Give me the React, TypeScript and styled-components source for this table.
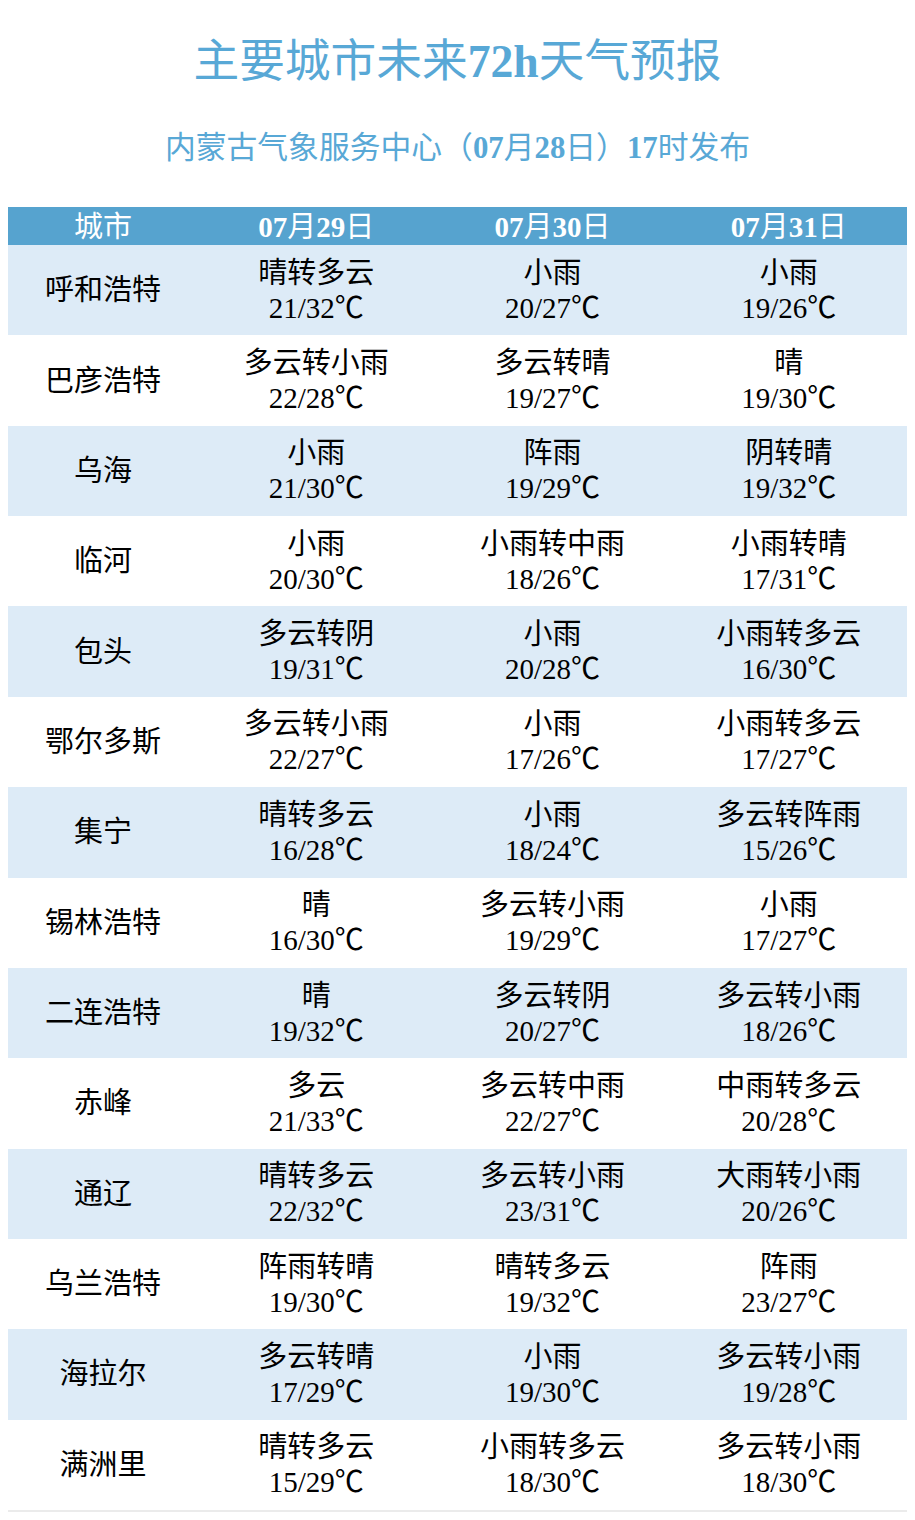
import React from "react"
import styled, { createGlobalStyle } from "styled-components"

const GlobalStyle = createGlobalStyle`
    body {
        margin: 0;
        background: #fff;
        font-family: "Liberation Serif", "Noto Sans CJK SC", serif;
    }
`;

type Day = [string, string]

interface ICity {
    name: string,
    days: Day[]
}

const dates = ["07月29日", "07月30日", "07月31日"]

const cities: ICity[] = [
    { name: "呼和浩特", days: [["晴转多云", "21/32"], ["小雨", "20/27"], ["小雨", "19/26"]] },
    { name: "巴彦浩特", days: [["多云转小雨", "22/28"], ["多云转晴", "19/27"], ["晴", "19/30"]] },
    { name: "乌海", days: [["小雨", "21/30"], ["阵雨", "19/29"], ["阴转晴", "19/32"]] },
    { name: "临河", days: [["小雨", "20/30"], ["小雨转中雨", "18/26"], ["小雨转晴", "17/31"]] },
    { name: "包头", days: [["多云转阴", "19/31"], ["小雨", "20/28"], ["小雨转多云", "16/30"]] },
    { name: "鄂尔多斯", days: [["多云转小雨", "22/27"], ["小雨", "17/26"], ["小雨转多云", "17/27"]] },
    { name: "集宁", days: [["晴转多云", "16/28"], ["小雨", "18/24"], ["多云转阵雨", "15/26"]] },
    { name: "锡林浩特", days: [["晴", "16/30"], ["多云转小雨", "19/29"], ["小雨", "17/27"]] },
    { name: "二连浩特", days: [["晴", "19/32"], ["多云转阴", "20/27"], ["多云转小雨", "18/26"]] },
    { name: "赤峰", days: [["多云", "21/33"], ["多云转中雨", "22/27"], ["中雨转多云", "20/28"]] },
    { name: "通辽", days: [["晴转多云", "22/32"], ["多云转小雨", "23/31"], ["大雨转小雨", "20/26"]] },
    { name: "乌兰浩特", days: [["阵雨转晴", "19/30"], ["晴转多云", "19/32"], ["阵雨", "23/27"]] },
    { name: "海拉尔", days: [["多云转晴", "17/29"], ["小雨", "19/30"], ["多云转小雨", "19/28"]] },
    { name: "满洲里", days: [["晴转多云", "15/29"], ["小雨转多云", "18/30"], ["多云转小雨", "18/30"]] },
]

// digits and latin runs are bold in the headings, the CJK glyphs are not
const boldLatin = (text: string) =>
    text.split(/([0-9a-z]+)/).map((part, i) =>
        /^[0-9a-z]+$/.test(part) ? <Num key={i}>{part}</Num> : part
    )

export default function App() {
    return (
        <Page>
            <GlobalStyle />
            <Title>{boldLatin("主要城市未来72h天气预报")}</Title>
            <Subtitle>{boldLatin("内蒙古气象服务中心（07月28日）17时发布")}</Subtitle>
            <Table>
                <HeadRow>
                    <HeadCell>城市</HeadCell>
                    {dates.map(d => <HeadCell key={d}>{boldLatin(d)}</HeadCell>)}
                </HeadRow>
                {cities.map((c, i) => (
                    <Row key={c.name} $shaded={i % 2 === 0}>
                        <Cell>{c.name}</Cell>
                        {c.days.map((d, j) => (
                            <Cell key={j}>
                                <Line>{d[0]}</Line>
                                <Line>{d[1]}℃</Line>
                            </Cell>
                        ))}
                    </Row>
                ))}
            </Table>
        </Page>
    )
}


// Styles
const Page = styled.div`
    width: 915px;
    padding: 30px 0 8px;
    display: flex;
    flex-direction: column;
    align-items: center;
    color: #000;
`;

const Num = styled.span`
    font-weight: 700;
`;

const Title = styled.h1`
    margin: 0;
    font-size: 45.7px;
    font-weight: 400;
    line-height: 64px;
    color: #58a8d6;
    white-space: nowrap;
`;

const Subtitle = styled.h2`
    margin: 34px 0 0;
    font-size: 30.8px;
    font-weight: 400;
    line-height: 40px;
    color: #58a8d6;
    white-space: nowrap;
`;

const Table = styled.div`
    align-self: stretch;
    margin: 39px 8px 0;
    display: flex;
    flex-direction: column;
    border-bottom: 2px solid #ebebeb;
`;

const HeadRow = styled.div`
    display: grid;
    grid-template-columns: 190px repeat(3, 1fr);
    height: 38px;
    background: #56a3cf;
`;

const HeadCell = styled.div`
    display: flex;
    align-items: center;
    justify-content: center;
    font-size: 29px;
    line-height: 38px;
    padding-top: 1px;
    color: #fff;
`;

const Row = styled.div<{ $shaded: boolean }>`
    display: grid;
    grid-template-columns: 190px repeat(3, 1fr);
    height: 90.36px;
    background: ${p => p.$shaded ? "#ddebf7" : "#fff"};
`;

const Cell = styled.div`
    display: flex;
    flex-direction: column;
    align-items: center;
    justify-content: center;
    padding-top: 1px;
    font-size: 29px;
    line-height: 35px;
    white-space: nowrap;
`;

const Line = styled.div``;
